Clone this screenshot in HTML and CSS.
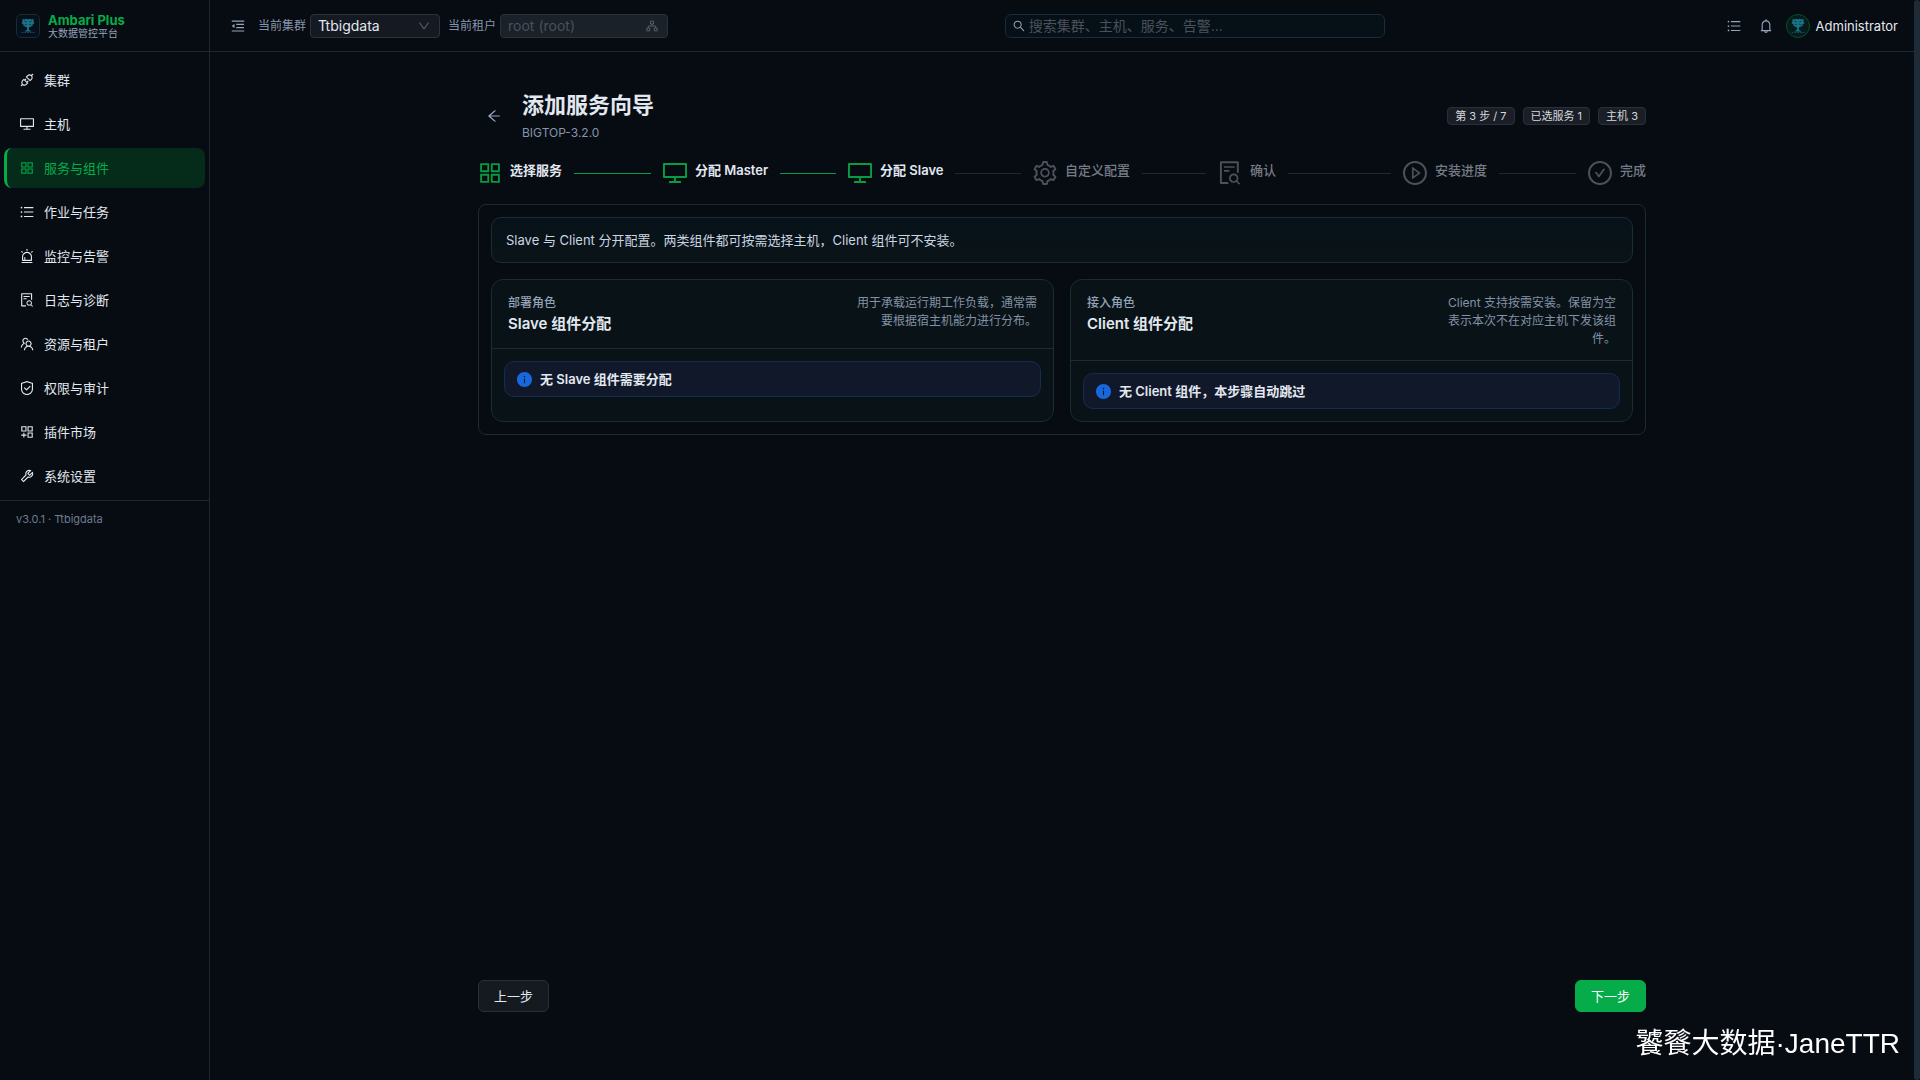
FILE: index.html
```html
<!DOCTYPE html>
<html lang="zh-CN">
<head>
    <meta charset="UTF-8">
    <meta name="viewport" content="width=device-width, initial-scale=1.0">
    <title>Ambari Plus</title>
    <link rel="stylesheet" href="styles.css">
</head>
<body>

    <!-- Icon sprite -->
    <svg class="sprite" aria-hidden="true">
        <symbol id="icon-api" viewBox="64 64 896 896"><path d="M917.7 148.8l-42.4-42.4c-1.6-1.6-3.6-2.3-5.7-2.3s-4.1.8-5.7 2.3l-76.1 76.1a199.27 199.27 0 00-112.1-34.3c-51.2 0-102.4 19.5-141.5 58.6L432.3 308.7a8.03 8.03 0 000 11.3L704 591.7c1.6 1.6 3.6 2.3 5.7 2.3 2 0 4.1-.8 5.7-2.3l101.9-101.9c68.9-69 77-175.7 24.3-253.5l76.1-76.1c3.1-3.2 3.1-8.3 0-11.4zM769.1 441.7l-59.4 59.4-186.8-186.8 59.4-59.4c24.9-24.9 58.1-38.7 93.4-38.7 35.3 0 68.4 13.7 93.4 38.7 24.9 24.9 38.7 58.1 38.7 93.4 0 35.3-13.8 68.4-38.7 93.4zm-190.2 105a8.03 8.03 0 00-11.3 0L501 613.3 410.7 523l66.7-66.7c3.1-3.1 3.1-8.2 0-11.3L441 408.6a8.03 8.03 0 00-11.3 0L363 475.3l-43-43a7.85 7.85 0 00-5.7-2.3c-2 0-4.1.8-5.7 2.3L206.8 534.2c-68.9 69-77 175.7-24.3 253.5l-76.1 76.1a8.03 8.03 0 000 11.3l42.4 42.4c1.6 1.6 3.6 2.3 5.7 2.3s4.1-.8 5.7-2.3l76.1-76.1c33.7 22.9 72.9 34.3 112.1 34.3 51.2 0 102.4-19.5 141.5-58.6l101.9-101.9c3.1-3.1 3.1-8.2 0-11.3l-43-43 66.7-66.7c3.1-3.1 3.1-8.2 0-11.3l-36.6-36.2zM441.7 769.1a131.32 131.32 0 01-93.4 38.7c-35.3 0-68.4-13.7-93.4-38.7a131.32 131.32 0 01-38.7-93.4c0-35.3 13.7-68.4 38.7-93.4l59.4-59.4 186.8 186.8-59.4 59.4z"/></symbol>
        <symbol id="icon-desktop" viewBox="64 64 896 896"><path d="M928 140H96c-17.7 0-32 14.3-32 32v496c0 17.7 14.3 32 32 32h380v112H304c-8.8 0-16 7.2-16 16v48c0 4.4 3.6 8 8 8h432c4.4 0 8-3.6 8-8v-48c0-8.8-7.2-16-16-16H548V700h380c17.7 0 32-14.3 32-32V172c0-17.7-14.3-32-32-32zm-40 488H136V212h752v416z"/></symbol>
        <symbol id="icon-appstore" viewBox="64 64 896 896"><path d="M464 144H160c-8.8 0-16 7.2-16 16v304c0 8.8 7.2 16 16 16h304c8.8 0 16-7.2 16-16V160c0-8.8-7.2-16-16-16zm-52 268H212V212h200v200zm452-268H560c-8.8 0-16 7.2-16 16v304c0 8.8 7.2 16 16 16h304c8.8 0 16-7.2 16-16V160c0-8.8-7.2-16-16-16zm-52 268H612V212h200v200zM464 544H160c-8.8 0-16 7.2-16 16v304c0 8.8 7.2 16 16 16h304c8.8 0 16-7.2 16-16V560c0-8.8-7.2-16-16-16zm-52 268H212V612h200v200zm452-268H560c-8.8 0-16 7.2-16 16v304c0 8.8 7.2 16 16 16h304c8.8 0 16-7.2 16-16V560c0-8.8-7.2-16-16-16zm-52 268H612V612h200v200z"/></symbol>
        <symbol id="icon-list" viewBox="64 64 896 896"><path d="M912 192H328c-4.4 0-8 3.6-8 8v56c0 4.4 3.6 8 8 8h584c4.4 0 8-3.6 8-8v-56c0-4.4-3.6-8-8-8zm0 284H328c-4.4 0-8 3.6-8 8v56c0 4.4 3.6 8 8 8h584c4.4 0 8-3.6 8-8v-56c0-4.4-3.6-8-8-8zm0 284H328c-4.4 0-8 3.6-8 8v56c0 4.4 3.6 8 8 8h584c4.4 0 8-3.6 8-8v-56c0-4.4-3.6-8-8-8zM104 228a56 56 0 10112 0 56 56 0 10-112 0zm0 284a56 56 0 10112 0 56 56 0 10-112 0zm0 284a56 56 0 10112 0 56 56 0 10-112 0z"/></symbol>
        <symbol id="icon-alert" viewBox="64 64 896 896"><path d="M193 796c0 17.7 14.3 32 32 32h574c17.7 0 32-14.3 32-32V563c0-176.2-142.8-319-319-319S193 386.8 193 563v233zm72-233c0-136.4 110.6-247 247-247s247 110.6 247 247v193H404V585c0-5.5-4.5-10-10-10h-44c-5.5 0-10 4.5-10 10v171h-75V563zm-48.1-252.5l39.6-39.6c3.1-3.1 3.1-8.2 0-11.3l-67.9-67.9a8.03 8.03 0 00-11.3 0l-39.6 39.6a8.03 8.03 0 000 11.3l67.9 67.9c3.1 3.1 8.1 3.1 11.3 0zm669.6-79.2l-39.6-39.6a8.03 8.03 0 00-11.3 0l-67.9 67.9a8.03 8.03 0 000 11.3l39.6 39.6c3.1 3.1 8.2 3.1 11.3 0l67.9-67.9c3.1-3.2 3.1-8.2 0-11.3zM832 892H192c-17.7 0-32 14.3-32 32v24c0 4.4 3.6 8 8 8h688c4.4 0 8-3.6 8-8v-24c0-17.7-14.3-32-32-32zM484 180h56c4.4 0 8-3.6 8-8V76c0-4.4-3.6-8-8-8h-56c-4.4 0-8 3.6-8 8v96c0 4.4 3.6 8 8 8z"/></symbol>
        <symbol id="icon-file-search" viewBox="64 64 896 896"><path d="M688 312v-48c0-4.4-3.6-8-8-8H296c-4.4 0-8 3.6-8 8v48c0 4.4 3.6 8 8 8h384c4.4 0 8-3.6 8-8zm-392 88c-4.4 0-8 3.6-8 8v48c0 4.4 3.6 8 8 8h184c4.4 0 8-3.6 8-8v-48c0-4.4-3.6-8-8-8H296zm144 452H208V148h560v344c0 4.4 3.6 8 8 8h56c4.4 0 8-3.6 8-8V108c0-17.7-14.3-32-32-32H168c-17.7 0-32 14.3-32 32v784c0 17.7 14.3 32 32 32h272c4.4 0 8-3.6 8-8v-56c0-4.4-3.6-8-8-8zm445.7 51.5l-93.3-93.3C814.7 780.7 828 743.9 828 704c0-97.2-78.8-176-176-176s-176 78.8-176 176 78.8 176 176 176c35.8 0 69-10.7 96.8-29l94.7 94.7c1.6 1.6 3.6 2.3 5.6 2.3s4.1-.8 5.6-2.3l31-31a7.9 7.9 0 000-11.2zM652 816c-61.9 0-112-50.1-112-112s50.1-112 112-112 112 50.1 112 112-50.1 112-112 112z"/></symbol>
        <symbol id="icon-team" viewBox="64 64 896 896"><path d="M824.2 699.9a301.55 301.55 0 00-86.4-60.4C783.1 602.8 812 546.8 812 484c0-110.8-92.4-201.7-203.2-200-109.1 1.7-197 90.6-197 200 0 62.8 29 118.8 74.2 155.5a300.95 300.95 0 00-86.4 60.4C345 754.6 314 826.8 312 903.8a8 8 0 008 8.2h56c4.3 0 7.9-3.4 8-7.7 1.9-58 25.4-112.3 66.7-153.5A226.62 226.62 0 01612 684c60.9 0 118.2 23.7 161.3 66.8C814.6 792 838 846.3 840 904.3c.1 4.3 3.7 7.7 8 7.7h56a8 8 0 008-8.2c-2-77-33-149.2-87.8-203.9zM612 612c-34.2 0-66.4-13.3-90.5-37.5a126.86 126.86 0 01-37.5-91.8c.3-32.8 13.4-64.5 36.3-88 24-24.6 56.1-38.3 90.4-38.7 33.9-.3 66.8 12.9 91 36.6 24.8 24.3 38.4 56.8 38.4 91.4 0 34.2-13.3 66.3-37.5 90.5A127.3 127.3 0 01612 612zM361.5 510.4c-.9-8.7-1.4-17.5-1.4-26.4 0-15.9 1.5-31.4 4.3-46.5.7-3.6-1.2-7.3-4.5-8.8-13.6-6.1-26.1-14.5-36.9-25.1a127.54 127.54 0 01-38.7-95.4c.9-32.1 13.8-62.6 36.3-85.6 24.7-25.3 57.9-39.1 93.2-38.7 31.9.3 62.7 12.6 86 34.4 7.9 7.4 14.7 15.6 20.4 24.4 2 3.1 5.9 4.4 9.3 3.2 17.6-6.1 36.2-10.4 55.3-12.4 5.6-.6 8.8-6.6 6.3-11.6-32.5-64.3-98.9-108.7-175.7-109.9-110.9-1.7-203.3 89.2-203.3 199.9 0 62.8 28.9 118.8 74.2 155.5-31.8 14.7-61.1 35-86.5 60.4-54.8 54.7-85.8 126.9-87.8 204a8 8 0 008 8.2h56.1c4.3 0 7.9-3.4 8-7.7 1.9-58 25.4-112.3 66.7-153.5 29.4-29.4 65.4-49.8 104.7-59.7 3.9-1 6.5-4.7 6-8.7z"/></symbol>
        <symbol id="icon-safety" viewBox="64 64 896 896"><path d="M512 64L128 192v384c0 212.1 171.9 384 384 384s384-171.9 384-384V192L512 64zm312 512c0 172.3-139.7 312-312 312S200 748.3 200 576V246l312-110 312 110v330z"/><path d="M378.4 475.1a35.91 35.91 0 00-50.9 0 35.91 35.91 0 000 50.9l129.4 129.4 2.1 2.1a33.98 33.98 0 0048.1 0L730.6 434a33.98 33.98 0 000-48.1l-2.8-2.8a33.98 33.98 0 00-48.1 0L483 579.7 378.4 475.1z"/></symbol>
        <symbol id="icon-appstore-add" viewBox="64 64 896 896"><path fill="none" stroke="currentColor" stroke-width="70" d="M179 179h266v266H179zM579 179h266v266H579zM579 579h266v266H579zM312 560v304M144 712h336"/></symbol>
        <symbol id="icon-tool" viewBox="64 64 896 896"><path d="M876.6 239.5c-.5-.9-1.2-1.8-2-2.5-5-5-13.1-5-18.1 0L684.2 409.3l-67.9-67.9L788.7 169c.8-.8 1.4-1.6 2-2.5 3.6-6.1 1.6-13.9-4.5-17.5-98.2-58-226.8-44.7-311.3 39.7-67 67-89.2 162-66.5 247.4l-293 293c-3 3-2.8 7.9.3 11l169.7 169.7c3.1 3.1 8.1 3.3 11 .3l292.9-292.9c85.5 22.8 180.5.7 247.6-66.4 84.4-84.5 97.7-213.1 39.7-311.3zM786 499.8c-58.1 58.1-145.3 69.3-214.6 33.6l-8.8 8.8-.1-.1-274 274.1-79.2-79.2 230.1-230.1s0 .1.1.1l52.8-52.8c-35.7-69.3-24.5-156.5 33.6-214.6a184.2 184.2 0 01144-53.5L537 318.9a32.05 32.05 0 000 45.3l124.5 124.5a32.05 32.05 0 0045.3 0l132.8-132.8c3.7 51.8-14.4 104.8-53.6 143.9z"/></symbol>
        <symbol id="icon-menu-fold" viewBox="64 64 896 896"><path d="M408 442h480c4.4 0 8-3.6 8-8v-56c0-4.4-3.6-8-8-8H408c-4.4 0-8 3.6-8 8v56c0 4.4 3.6 8 8 8zm-8 204c0 4.4 3.6 8 8 8h480c4.4 0 8-3.6 8-8v-56c0-4.4-3.6-8-8-8H408c-4.4 0-8 3.6-8 8v56zm504-486H120c-4.4 0-8 3.6-8 8v56c0 4.4 3.6 8 8 8h784c4.4 0 8-3.6 8-8v-56c0-4.4-3.6-8-8-8zm0 632H120c-4.4 0-8 3.6-8 8v56c0 4.4 3.6 8 8 8h784c4.4 0 8-3.6 8-8v-56c0-4.4-3.6-8-8-8zM115.4 518.9L271.7 642c5.8 4.6 14.4.5 14.4-6.9V388.9c0-7.4-8.5-11.5-14.4-6.9L115.4 505.1a8.74 8.74 0 000 13.8z"/></symbol>
        <symbol id="icon-bell" viewBox="64 64 896 896"><path d="M816 768h-24V428c0-141.1-104.3-257.7-240-277.1V112c0-22.1-17.9-40-40-40s-40 17.9-40 40v38.9c-135.7 19.4-240 136-240 277.1v340h-24c-17.7 0-32 14.3-32 32v32c0 4.4 3.6 8 8 8h216c0 61.8 50.2 112 112 112s112-50.2 112-112h216c4.4 0 8-3.6 8-8v-32c0-17.7-14.3-32-32-32zM512 888c-26.5 0-48-21.5-48-48h96c0 26.5-21.5 48-48 48zM304 768V428c0-55.6 21.6-107.8 60.9-147.1S456.4 220 512 220c55.6 0 107.8 21.6 147.1 60.9S720 372.4 720 428v340H304z"/></symbol>
        <symbol id="icon-search" viewBox="64 64 896 896"><path d="M909.6 854.5L649.9 594.8C690.2 542.7 712 479 712 412c0-80.2-31.3-155.4-87.9-212.1-56.6-56.7-132-87.9-212.1-87.9s-155.5 31.3-212.1 87.9C143.2 256.5 112 331.8 112 412c0 80.1 31.3 155.5 87.9 212.1C256.5 680.8 331.8 712 412 712c67 0 130.6-21.8 182.7-62l259.7 259.6a8.2 8.2 0 0011.6 0l43.6-43.5a8.2 8.2 0 000-11.6zM570.4 570.4C528 612.7 471.8 636 412 636s-116-23.3-158.4-65.6C211.3 528 188 471.8 188 412s23.3-116.1 65.6-158.4C296 211.3 352.2 188 412 188s116.1 23.2 158.4 65.6S636 352.2 636 412s-23.3 116.1-65.6 158.4z"/></symbol>
        <symbol id="icon-down" viewBox="64 64 896 896"><path d="M884 256h-75c-5.1 0-9.9 2.5-12.9 6.6L512 654.2 227.9 262.6c-3-4.1-7.8-6.6-12.9-6.6h-75c-6.5 0-10.3 7.4-6.5 12.7l352.6 486.1c12.8 17.6 39 17.6 51.7 0l352.6-486.1c3.9-5.3.1-12.7-6.4-12.7z"/></symbol>
        <symbol id="icon-apartment" viewBox="64 64 896 896"><path fill="none" stroke="currentColor" stroke-width="72" d="M402 146h220v220H402zM126 658h220v220H126zM678 658h220v220H678zM512 366v146M236 658V512h552v146"/></symbol>
        <symbol id="icon-arrow-left" viewBox="64 64 896 896"><path d="M872 474H286.9l350.2-304c5.6-4.9 2.2-14-5.2-14h-88.5c-3.9 0-7.6 1.4-10.5 3.9L155 487.8a31.96 31.96 0 000 48.3L535.1 866c1.5 1.3 3.3 2 5.2 2h91.5c7.4 0 10.8-9.2 5.2-14L286.9 550H872c4.4 0 8-3.6 8-8v-60c0-4.4-3.6-8-8-8z"/></symbol>
        <symbol id="icon-setting" viewBox="64 64 896 896"><path d="M924.8 625.7l-65.5-56c3.1-19 4.7-38.4 4.7-57.8s-1.6-38.8-4.7-57.8l65.5-56a32.03 32.03 0 009.3-35.2l-.9-2.6a443.74 443.74 0 00-79.7-137.9l-1.8-2.1a32.12 32.12 0 00-35.1-9.5l-81.3 28.9c-30-24.6-63.5-44-99.7-57.6l-15.7-85a32.05 32.05 0 00-25.8-25.7l-2.7-.5c-52.1-9.4-106.9-9.4-159 0l-2.7.5a32.05 32.05 0 00-25.8 25.7l-15.8 85.4a351.86 351.86 0 00-99 57.4l-81.9-29.1a32 32 0 00-35.1 9.5l-1.8 2.1a446.02 446.02 0 00-79.7 137.9l-.9 2.6c-4.5 12.5-.8 26.5 9.3 35.2l66.3 56.6c-3.1 18.8-4.6 38-4.6 57.1 0 19.2 1.5 38.4 4.6 57.1L99 625.5a32.03 32.03 0 00-9.3 35.2l.9 2.6c18.1 50.4 44.9 96.9 79.7 137.9l1.8 2.1a32.12 32.12 0 0035.1 9.5l81.9-29.1c29.8 24.5 63.1 43.9 99 57.4l15.8 85.4a32.05 32.05 0 0025.8 25.7l2.7.5a449.4 449.4 0 00159 0l2.7-.5a32.05 32.05 0 0025.8-25.7l15.7-85a350 350 0 0099.7-57.6l81.3 28.9a32 32 0 0035.1-9.5l1.8-2.1c34.8-41.1 61.6-87.5 79.7-137.9l.9-2.6c4.5-12.3.8-26.3-9.3-35zM788.3 465.9c2.5 15.1 3.8 30.6 3.8 46.1s-1.3 31-3.8 46.1l-6.6 40.1 74.7 63.9a370.03 370.03 0 01-42.6 73.6L721 702.8l-31.4 25.8c-23.9 19.6-50.5 35-79.3 45.8l-38.1 14.3-17.9 97a377.5 377.5 0 01-85 0l-17.9-97.2-37.8-14.5c-28.5-10.8-55-26.2-78.7-45.7l-31.4-25.9-93.4 33.2c-17-22.9-31.2-47.6-42.6-73.6l75.5-64.5-6.5-40c-2.4-14.9-3.7-30.3-3.7-45.5 0-15.3 1.2-30.6 3.7-45.5l6.5-40-75.5-64.5c11.3-26.1 25.6-50.7 42.6-73.6l93.4 33.2 31.4-25.9c23.7-19.5 50.2-34.9 78.7-45.7l37.9-14.3 17.9-97.2c28.1-3.2 56.8-3.2 85 0l17.9 97 38.1 14.3c28.7 10.8 55.4 26.2 79.3 45.8l31.4 25.8 92.8-32.9c17 22.9 31.2 47.6 42.6 73.6L781.8 426l6.5 39.9zM512 326c-97.2 0-176 78.8-176 176s78.8 176 176 176 176-78.8 176-176-78.8-176-176-176zm79.2 255.2A111.6 111.6 0 01512 614c-29.9 0-58-11.7-79.2-32.8A111.6 111.6 0 01400 502c0-29.9 11.7-58 32.8-79.2C454 401.6 482.1 390 512 390c29.9 0 58 11.6 79.2 32.8A111.6 111.6 0 01624 502c0 29.9-11.7 58-32.8 79.2z"/></symbol>
        <symbol id="icon-play-circle" viewBox="64 64 896 896"><path d="M512 64C264.6 64 64 264.6 64 512s200.6 448 448 448 448-200.6 448-448S759.4 64 512 64zm0 820c-205.4 0-372-166.6-372-372s166.6-372 372-372 372 166.6 372 372-166.6 372-372 372z"/><path d="M719.4 499.1l-296.1-215A15.9 15.9 0 00398 297v430c0 13.1 14.8 20.5 25.3 12.9l296.1-215a15.9 15.9 0 000-25.8zm-257.6 134V390.9L628.5 512 461.8 633.1z"/></symbol>
        <symbol id="icon-check-circle" viewBox="64 64 896 896"><path d="M699 353h-46.9c-10.2 0-19.9 4.9-25.9 13.3L469 584.3l-71.2-98.8c-6-8.3-15.6-13.3-25.9-13.3H325c-6.5 0-10.3 7.4-6.5 12.7l124.6 172.8a31.8 31.8 0 0051.7 0l210.6-292c3.9-5.3.1-12.7-6.4-12.7z"/><path d="M512 64C264.6 64 64 264.6 64 512s200.6 448 448 448 448-200.6 448-448S759.4 64 512 64zm0 820c-205.4 0-372-166.6-372-372s166.6-372 372-372 372 166.6 372 372-166.6 372-372 372z"/></symbol>
        <symbol id="icon-info" viewBox="64 64 896 896"><path d="M512 64C264.6 64 64 264.6 64 512s200.6 448 448 448 448-200.6 448-448S759.4 64 512 64zm32 664c0 4.4-3.6 8-8 8h-48c-4.4 0-8-3.6-8-8V456c0-4.4 3.6-8 8-8h48c4.4 0 8 3.6 8 8v272zm-32-344a48.01 48.01 0 010-96 48.01 48.01 0 010 96z"/></symbol>
        <symbol id="icon-tree" viewBox="0 0 24 24">
            <path fill="#1b7488" d="M6 4l2 1 2-1 2 1 2-1 2 1 2-1v3l1 2-2 1v2l-3 1-1 1v2l3 2H8l3-2v-2l-1-1-3-1v-2l-2-1 1-2z"/>
            <path fill="none" stroke="#0b3d4b" d="M8 7h2v1M16 7h-2v1M8 11l3-1M16 11l-3-1"/>
            <path fill="none" stroke="#1a557c" stroke-dasharray="2 1" d="M5 19h14"/>
        </symbol>
    </svg>

    <div class="app">

        <!-- Sidebar -->
        <aside class="sidebar">
            <div class="brand">
                <span class="brand-logo"><svg><use href="#icon-tree"/></svg></span>
                <div class="brand-text">
                    <div class="brand-name">Ambari Plus</div>
                    <div class="brand-sub">大数据管控平台</div>
                </div>
            </div>
            <nav class="menu">
                <a class="menu-item" href="#"><svg class="icon"><use href="#icon-api"/></svg>集群</a>
                <a class="menu-item" href="#"><svg class="icon"><use href="#icon-desktop"/></svg>主机</a>
                <a class="menu-item active" href="#"><svg class="icon"><use href="#icon-appstore"/></svg>服务与组件</a>
                <a class="menu-item" href="#"><svg class="icon"><use href="#icon-list"/></svg>作业与任务</a>
                <a class="menu-item" href="#"><svg class="icon"><use href="#icon-alert"/></svg>监控与告警</a>
                <a class="menu-item" href="#"><svg class="icon"><use href="#icon-file-search"/></svg>日志与诊断</a>
                <a class="menu-item" href="#"><svg class="icon"><use href="#icon-team"/></svg>资源与租户</a>
                <a class="menu-item" href="#"><svg class="icon"><use href="#icon-safety"/></svg>权限与审计</a>
                <a class="menu-item" href="#"><svg class="icon"><use href="#icon-appstore-add"/></svg>插件市场</a>
                <a class="menu-item" href="#"><svg class="icon"><use href="#icon-tool"/></svg>系统设置</a>
            </nav>
            <div class="version">v3.0.1 · Ttbigdata</div>
        </aside>

        <div class="page">

            <!-- Top bar -->
            <header class="header">
                <div class="header-left">
                    <button class="icon-btn" aria-label="收起菜单"><svg class="icon"><use href="#icon-menu-fold"/></svg></button>
                    <div class="field">
                        <label for="cluster">当前集群</label>
                        <div class="control cluster">
                            <select id="cluster"><option>Ttbigdata</option></select>
                            <svg class="control-icon"><use href="#icon-down"/></svg>
                        </div>
                    </div>
                    <div class="field">
                        <label for="tenant">当前租户</label>
                        <div class="control tenant">
                            <input type="text" id="tenant" value="root (root)" disabled>
                            <svg class="control-icon"><use href="#icon-apartment"/></svg>
                        </div>
                    </div>
                </div>
                <label class="search">
                    <svg class="search-icon"><use href="#icon-search"/></svg>
                    <input type="text" placeholder="搜索集群、主机、服务、告警..." aria-label="搜索">
                </label>
                <div class="header-right">
                    <button class="icon-btn" aria-label="任务"><svg class="icon"><use href="#icon-list"/></svg></button>
                    <button class="icon-btn" aria-label="通知"><svg class="icon"><use href="#icon-bell"/></svg></button>
                    <a class="user" href="#">
                        <span class="avatar"><svg><use href="#icon-tree"/></svg></span>
                        Administrator
                    </a>
                </div>
            </header>

            <main class="wizard">
                <div class="wizard-head">
                    <button class="icon-btn back" aria-label="返回"><svg class="icon"><use href="#icon-arrow-left"/></svg></button>
                    <div class="wizard-title">
                        <h1>添加服务向导</h1>
                        <p>BIGTOP-3.2.0</p>
                    </div>
                    <div class="tags">
                        <span class="tag">第 3 步 / 7</span>
                        <span class="tag">已选服务 1</span>
                        <span class="tag">主机 3</span>
                    </div>
                </div>

                <!-- Steps -->
                <ol class="steps">
                    <li class="step done"><svg class="step-icon"><use href="#icon-appstore"/></svg><span class="step-title">选择服务</span></li>
                    <li class="step done"><svg class="step-icon"><use href="#icon-desktop"/></svg><span class="step-title">分配 Master</span></li>
                    <li class="step current"><svg class="step-icon"><use href="#icon-desktop"/></svg><span class="step-title">分配 Slave</span></li>
                    <li class="step"><svg class="step-icon"><use href="#icon-setting"/></svg><span class="step-title">自定义配置</span></li>
                    <li class="step"><svg class="step-icon"><use href="#icon-file-search"/></svg><span class="step-title">确认</span></li>
                    <li class="step"><svg class="step-icon"><use href="#icon-play-circle"/></svg><span class="step-title">安装进度</span></li>
                    <li class="step"><svg class="step-icon"><use href="#icon-check-circle"/></svg><span class="step-title">完成</span></li>
                </ol>

                <section class="panel">
                    <div class="note">Slave 与 Client 分开配置。两类组件都可按需选择主机，Client 组件可不安装。</div>
                    <div class="cards">
                        <article class="card">
                            <div class="card-head">
                                <div>
                                    <div class="card-kicker">部署角色</div>
                                    <h2>Slave 组件分配</h2>
                                </div>
                                <p class="card-desc">用于承载运行期工作负载，通常需要根据宿主机能力进行分布。</p>
                            </div>
                            <div class="card-body">
                                <div class="alert"><svg class="icon"><use href="#icon-info"/></svg>无 Slave 组件需要分配</div>
                            </div>
                        </article>
                        <article class="card">
                            <div class="card-head">
                                <div>
                                    <div class="card-kicker">接入角色</div>
                                    <h2>Client 组件分配</h2>
                                </div>
                                <p class="card-desc">Client 支持按需安装。保留为空<br>表示本次不在对应主机下发该组件。</p>
                            </div>
                            <div class="card-body">
                                <div class="alert"><svg class="icon"><use href="#icon-info"/></svg>无 Client 组件，本步骤自动跳过</div>
                            </div>
                        </article>
                    </div>
                </section>

                <div class="actions">
                    <button class="btn">上一步</button>
                    <button class="btn btn-primary">下一步</button>
                </div>
            </main>
        </div>

        <div class="scrollbar"></div>
    </div>

    <div class="watermark">饕餮大数据·JaneTTR</div>

</body>
</html>
```

FILE: styles.css
```css
* {
    box-sizing: border-box;
}

body {
    margin: 0;
    background-color: #070b12;
    color: #e2e8f0;
    font-family: Inter, "Noto Sans CJK SC", sans-serif;
    font-size: 13px;
    line-height: 20px;
}

h1, h2, p, ol {
    margin: 0;
    padding: 0;
}

a {
    color: inherit;
    text-decoration: none;
}

button, input, select {
    font: inherit;
    color: inherit;
}

.sprite {
    display: none;
}

.icon {
    width: 14px;
    height: 14px;
    flex: none;
    fill: currentColor;
}

.app {
    display: flex;
    min-height: 100vh;
}

/* Sidebar */
.sidebar {
    width: 210px;
    flex: none;
    border-right: 1px solid #1f272f;
}

.brand {
    display: flex;
    align-items: center;
    gap: 8px;
    height: 52px;
    padding: 0 16px;
    border-bottom: 1px solid #1f272f;
}

.brand-logo {
    width: 24px;
    height: 24px;
    border: 1px solid #1b2b33;
    border-radius: 5px;
    background-color: #06101a;
}

.brand-logo svg {
    display: block;
    width: 22px;
    height: 22px;
}

.brand-name {
    color: #06ac49;
    font-weight: 700;
    line-height: 14px;
}

.brand-sub {
    color: #94a3b8;
    font-size: 10px;
    line-height: 12px;
}

.menu {
    display: flex;
    flex-direction: column;
    gap: 4px;
    padding: 8px 4px 4px;
    border-bottom: 1px solid #1b2b33;
}

.menu-item {
    display: flex;
    align-items: center;
    gap: 10px;
    height: 40px;
    padding-left: 13px;
    border-left: 3px solid transparent;
    border-radius: 8px;
}

.menu-item.active {
    color: #06ac49;
    background-color: #052b1b;
    border-left-color: #06ac49;
}

.version {
    padding: 8px 16px;
    color: #6c7b90;
    font-size: 11px;
}

/* Top bar */
.page {
    flex: 1;
    min-width: 0;
    display: flex;
    flex-direction: column;
}

.header {
    display: flex;
    align-items: center;
    justify-content: space-between;
    height: 52px;
    padding: 0 16px;
    border-bottom: 1px solid #1f272f;
}

.header-left,
.header-right,
.field,
.user {
    display: flex;
    align-items: center;
    gap: 8px;
}

.user {
    gap: 6px;
}

.field {
    gap: 4px;
    color: #8695aa;
    font-size: 12px;
}

.icon-btn {
    display: flex;
    align-items: center;
    justify-content: center;
    width: 24px;
    height: 24px;
    padding: 0;
    border: none;
    background: none;
    color: #94a3b8;
    cursor: pointer;
}

.control {
    position: relative;
    font-size: 14px;
}

.control select,
.control input {
    display: block;
    width: 100%;
    height: 24px;
    padding: 0 7px;
    appearance: none;
    color: #e2e8f0;
    background-color: #151a22;
    border: 1px solid #2b323b;
    border-radius: 4px;
}

.control input:disabled {
    color: #48515b;
    background-color: #1a2129;
}

.cluster {
    width: 130px;
}

.tenant {
    width: 168px;
}

.control-icon {
    position: absolute;
    top: 6px;
    right: 10px;
    width: 12px;
    height: 12px;
    color: #59616b;
    fill: currentColor;
    pointer-events: none;
}

.search {
    display: flex;
    align-items: center;
    gap: 4px;
    width: 380px;
    height: 24px;
    padding: 0 7px;
    border: 1px solid #1b2b39;
    border-radius: 6px;
    background-color: #061017;
}

.search-icon {
    width: 12px;
    height: 12px;
    fill: #94a3b8;
}

.search input {
    flex: 1;
    min-width: 0;
    padding: 0;
    border: none;
    outline: none;
    background: none;
    font-size: 14px;
}

.search input::placeholder {
    color: #4a515b;
}

.avatar {
    width: 24px;
    height: 24px;
    border: 1px solid #06512b;
    border-radius: 50%;
    background-color: #051c1a;
}

.avatar svg {
    display: block;
    width: 22px;
    height: 22px;
}

/* Wizard */
.wizard {
    flex: 1;
    display: flex;
    flex-direction: column;
    width: 100%;
    max-width: 1200px;
    margin: 0 auto;
    padding: 36px 16px 68px;
}

.wizard-head {
    display: flex;
    align-items: center;
    height: 56px;
    padding-left: 4px;
}

.wizard-title {
    flex: 1;
    padding-left: 16px;
}

.wizard-title h1 {
    font-size: 22px;
    font-weight: 600;
    line-height: 32px;
}

.wizard-title p {
    margin-top: 2px;
    color: #8695aa;
    font-size: 12px;
}

.tags {
    display: flex;
    gap: 8px;
}

.tag {
    padding: 0 7px;
    color: #d5d9df;
    background-color: #1a1e26;
    border: 1px solid #2b3038;
    border-radius: 4px;
    font-size: 11px;
    line-height: 16px;
}

.steps {
    display: flex;
    gap: 12px;
    margin-top: 16px;
    list-style: none;
}

.step {
    display: flex;
    flex: 1;
    align-items: center;
    gap: 8px;
    height: 26px;
    color: #4c515a;
    white-space: nowrap;
}

.step:last-child {
    flex: none;
}

.step:not(:last-child)::after {
    content: "";
    flex: 1;
    height: 1px;
    margin-left: 4px;
    background-color: #23282f;
}

.step-icon {
    width: 24px;
    height: 24px;
    flex: none;
    fill: currentColor;
}

.step-title {
    margin-bottom: 6px;
    color: #767c86;
    font-weight: 500;
}

.step.done,
.step.current {
    color: #079b44;
}

.step.done .step-title,
.step.current .step-title {
    color: #e2e8f0;
    font-weight: 600;
}

.step.done::after {
    background-color: #079b44;
}

.panel {
    display: flex;
    flex-direction: column;
    gap: 16px;
    margin-top: 18px;
    padding: 12px;
    border: 1px solid #1c2a33;
    border-radius: 8px;
}

.note {
    padding: 12px 14px;
    color: #cbd5e1;
    border: 1px solid #1a2c35;
    border-radius: 10px;
    background: linear-gradient(#061119, #0a1418);
}

.cards {
    display: grid;
    grid-template-columns: 1fr 1fr;
    gap: 16px;
}

.card {
    border: 1px solid #1a2c35;
    border-radius: 12px;
    background-color: #091317;
}

.card-head {
    display: flex;
    justify-content: space-between;
    gap: 16px;
    padding: 14px 16px 12px;
    border-bottom: 1px solid #1a2c35;
}

.card-kicker {
    color: #94a3b8;
    font-size: 12px;
    font-weight: 500;
    line-height: 18px;
}

.card-head h2 {
    font-size: 15px;
    font-weight: 600;
    line-height: 24px;
}

.card-desc {
    max-width: 180px;
    color: #8391a6;
    font-size: 12px;
    line-height: 18px;
    text-align: right;
}

.card-body {
    padding: 12px;
}

.alert {
    display: flex;
    align-items: center;
    gap: 8px;
    padding: 8px 12px;
    border: 1px solid #152c50;
    border-radius: 10px;
    background-color: #111829;
    font-weight: 600;
    line-height: 18px;
}

.alert .icon {
    width: 15px;
    height: 15px;
    color: #1668dc;
}

.actions {
    display: flex;
    justify-content: space-between;
    margin-top: auto;
}

.btn {
    height: 32px;
    padding: 0 15px;
    border: 1px solid #2b3038;
    border-radius: 6px;
    background-color: #151a21;
    cursor: pointer;
}

.btn-primary {
    color: #fff;
    border-color: #06ac49;
    background-color: #06ac49;
}

.scrollbar {
    width: 6px;
    flex: none;
    border-radius: 3px;
    background-color: #1e2a35;
}

.watermark {
    position: fixed;
    right: 20px;
    bottom: 16px;
    color: #fff;
    font-family: "Liberation Sans", "Noto Sans CJK SC", sans-serif;
    font-size: 28px;
    line-height: 40px;
    pointer-events: none;
}
```
